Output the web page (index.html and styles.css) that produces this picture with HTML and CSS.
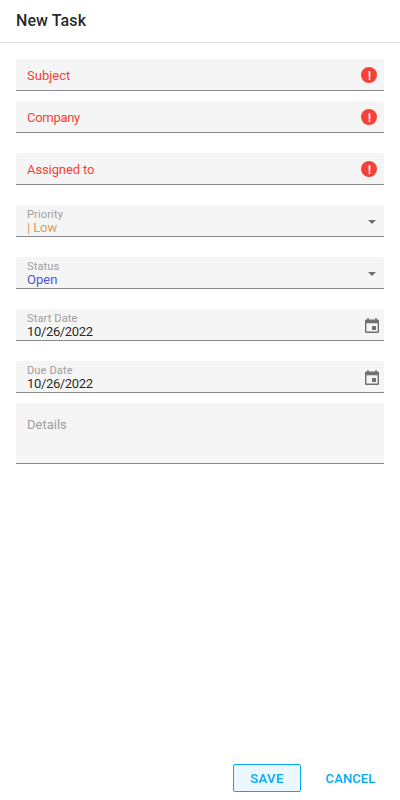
FILE: index.html
```html
<!DOCTYPE html>
<html lang="en">
<head>
<meta charset="utf-8">
<title>New Task</title>
<link rel="stylesheet" href="styles.css">
</head>
<body>
<div class="popup">
  <header class="title">New Task</header>
  <main class="form">
    <div class="field invalid"><span class="placeholder">Subject</span><span class="error">!</span></div>
    <div class="field invalid tight"><span class="placeholder company">Company</span><span class="error">!</span></div>
    <div class="field invalid"><span class="placeholder assigned">Assigned to</span><span class="error">!</span></div>
    <div class="field">
      <div class="content"><span class="label">Priority</span><span class="value low">| Low</span></div>
      <svg class="icon" viewBox="0 0 16 16"><path d="M4 6h8L8 10z"/></svg>
    </div>
    <div class="field">
      <div class="content"><span class="label">Status</span><span class="value open">Open</span></div>
      <svg class="icon" viewBox="0 0 16 16"><path d="M4 6h8L8 10z"/></svg>
    </div>
    <div class="field">
      <div class="content"><span class="label">Start Date</span><span class="value date">10/26/2022</span></div>
      <svg class="icon calendar" viewBox="0 0 14 15"><path fill-rule="evenodd" d="M2.300 0h1.400v1.500h6.600V0h1.400v1.500H13q1 0 1 1V14q0 1-1 1H1q-1 0-1-1V2.500q0-1 1-1h1.300zM1.400 5.300v8.300h11.200V5.300zM7 8h4v4H7z"/></svg>
    </div>
    <div class="field">
      <div class="content"><span class="label">Due Date</span><span class="value date">10/26/2022</span></div>
      <svg class="icon calendar" viewBox="0 0 14 15"><path fill-rule="evenodd" d="M2.300 0h1.400v1.500h6.600V0h1.400v1.500H13q1 0 1 1V14q0 1-1 1H1q-1 0-1-1V2.500q0-1 1-1h1.300zM1.400 5.300v8.300h11.200V5.300zM7 8h4v4H7z"/></svg>
    </div>
    <div class="field details tight"><span class="placeholder">Details</span></div>
  </main>
  <footer class="actions">
    <button class="button save">SAVE</button>
    <button class="button cancel">CANCEL</button>
  </footer>
</div>
</body>
</html>
```
FILE: styles.css
```css
* { box-sizing: border-box; }
body { margin: 0; background: #fff; color: rgba(0, 0, 0, .87); font: 13px/16px Roboto, sans-serif; }
.popup { display: flex; flex-direction: column; height: 800px; }
.title { height: 43px; padding: 10px 16px 0; border-bottom: 1px solid #e0e0e0; font-size: 16px; line-height: 21px; font-weight: 500; letter-spacing: .1px; }
.form { flex: 1; padding: 0 16px; }
.field { display: flex; align-items: center; justify-content: space-between; height: 32px; margin-top: 20px; padding: 0 4px 0 11px; background: #f5f5f5; border-bottom: 1px solid #8b8b8b; border-radius: 2px 2px 0 0; }
.field:first-child { margin-top: 16px; }
.field.tight { margin-top: 10px; }
.placeholder { color: #9e9e9e; padding-top: 2px; }
.company { letter-spacing: -.3px; }
.assigned { letter-spacing: -.1px; }
.invalid { padding-right: 7px; }
.invalid .placeholder { color: #f44336; }
.error { width: 16px; height: 16px; padding-left: 1px; border-radius: 50%; background: #f44336; color: #fff; font-size: 13px; line-height: 17px; font-weight: 500; text-align: center; }
.content { display: flex; flex-direction: column; align-self: flex-start; padding-top: 3px; }
.label { height: 12px; font-size: 11px; line-height: 13px; color: #9e9e9e; letter-spacing: .15px; }
.value { line-height: 16px; }
.date { letter-spacing: -.35px; }
.low { color: #d69c5c; letter-spacing: -.1px; }
.open { color: #4c55e0; }
.icon { width: 16px; height: 16px; margin-top: 2px; fill: #707070; }
.calendar { width: 14px; height: 15px; margin: 1px 1px 0 0; }
.details { height: 61px; align-items: flex-start; padding-top: 12px; }
.actions { display: flex; justify-content: flex-end; gap: 8px; height: 36px; padding-right: 8px; }
.button { height: 28px; padding: 2px 15px 0; border: 1px solid transparent; border-radius: 2px; background: none; color: #03a9f4; font: 500 13px/16px Roboto, sans-serif; letter-spacing: .5px; }
.save { width: 68px; background: #ebf8ff; border-color: #03a9f4; }
.cancel { width: 83px; letter-spacing: .1px; }
```
